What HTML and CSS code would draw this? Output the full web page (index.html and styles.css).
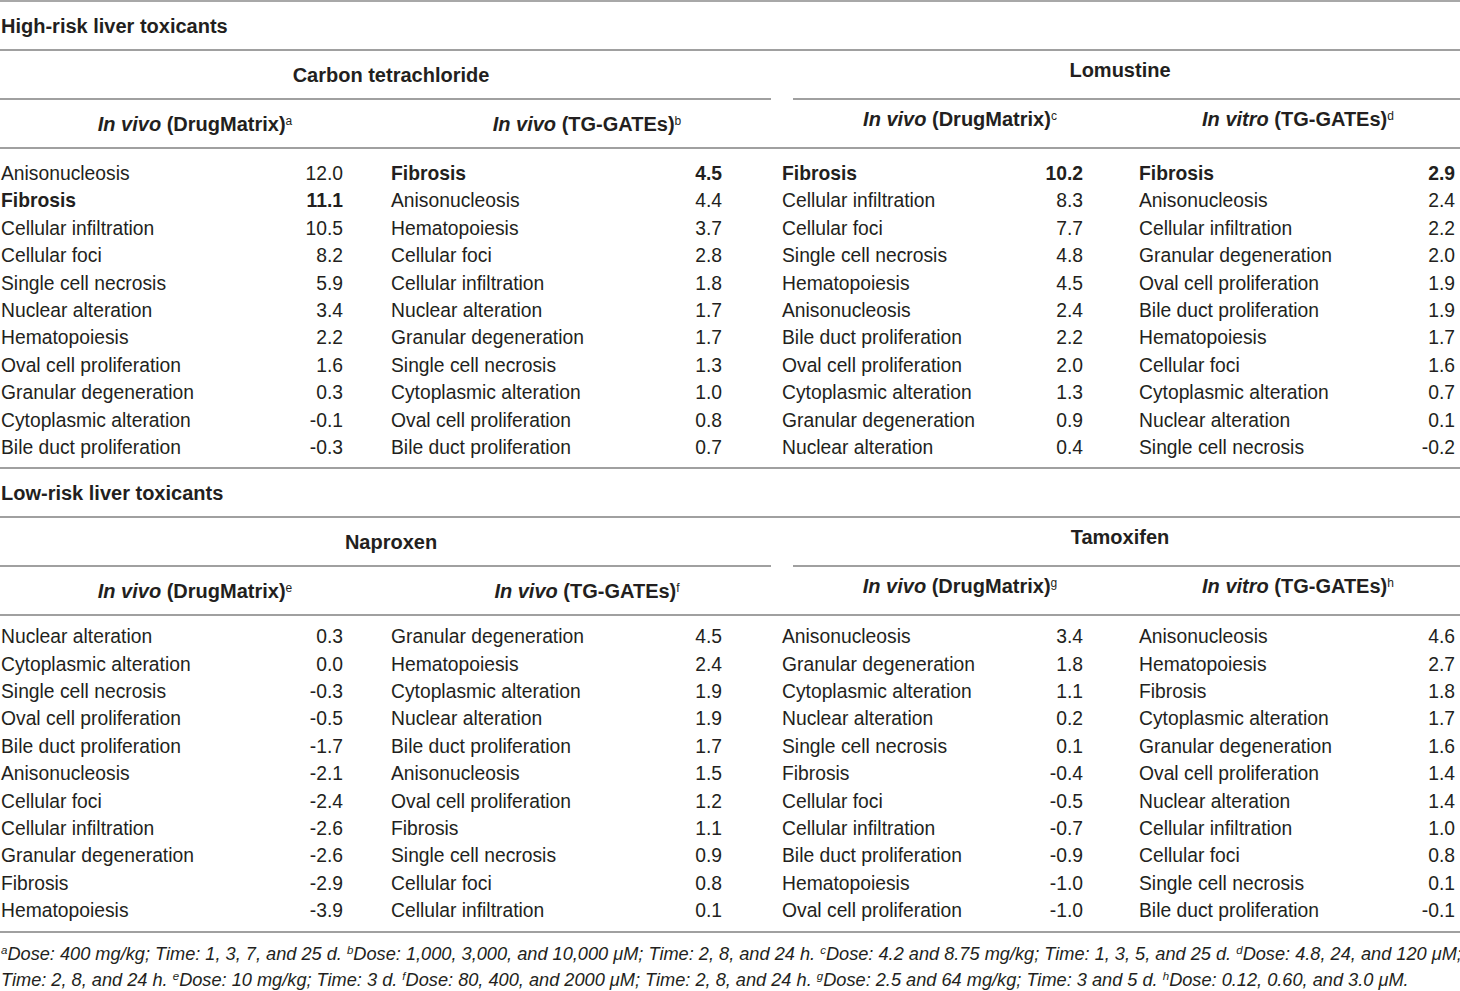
FILE: index.html
```html
<!DOCTYPE html>
<html lang="en">
<head>
<meta charset="utf-8">
<title>Liver toxicants</title>
<link rel="stylesheet" href="styles.css">
</head>
<body>
<div class="table">
  <div class="section-title">High-risk liver toxicants</div>
  <div class="compounds">
    <div class="compound left">Carbon tetrachloride</div>
    <div class="compound right">Lomustine</div>
  </div>
  <div class="subheads">
    <div class="subhead"><i>In vivo</i> (DrugMatrix)<sup>a</sup></div>
    <div class="subhead"><i>In vivo</i> (TG-GATEs)<sup>b</sup></div>
    <div class="subhead right"><i>In vivo</i> (DrugMatrix)<sup>c</sup></div>
    <div class="subhead right"><i>In vitro</i> (TG-GATEs)<sup>d</sup></div>
  </div>
  <div class="data top">
    <div class="cell c1"><span>Anisonucleosis</span><span>12.0</span></div>
    <div class="cell c2 b"><span>Fibrosis</span><span>4.5</span></div>
    <div class="cell c3 b"><span>Fibrosis</span><span>10.2</span></div>
    <div class="cell c4 b"><span>Fibrosis</span><span>2.9</span></div>

    <div class="cell c1 b"><span>Fibrosis</span><span>11.1</span></div>
    <div class="cell c2"><span>Anisonucleosis</span><span>4.4</span></div>
    <div class="cell c3"><span>Cellular infiltration</span><span>8.3</span></div>
    <div class="cell c4"><span>Anisonucleosis</span><span>2.4</span></div>

    <div class="cell c1"><span>Cellular infiltration</span><span>10.5</span></div>
    <div class="cell c2"><span>Hematopoiesis</span><span>3.7</span></div>
    <div class="cell c3"><span>Cellular foci</span><span>7.7</span></div>
    <div class="cell c4"><span>Cellular infiltration</span><span>2.2</span></div>

    <div class="cell c1"><span>Cellular foci</span><span>8.2</span></div>
    <div class="cell c2"><span>Cellular foci</span><span>2.8</span></div>
    <div class="cell c3"><span>Single cell necrosis</span><span>4.8</span></div>
    <div class="cell c4"><span>Granular degeneration</span><span>2.0</span></div>

    <div class="cell c1"><span>Single cell necrosis</span><span>5.9</span></div>
    <div class="cell c2"><span>Cellular infiltration</span><span>1.8</span></div>
    <div class="cell c3"><span>Hematopoiesis</span><span>4.5</span></div>
    <div class="cell c4"><span>Oval cell proliferation</span><span>1.9</span></div>

    <div class="cell c1"><span>Nuclear alteration</span><span>3.4</span></div>
    <div class="cell c2"><span>Nuclear alteration</span><span>1.7</span></div>
    <div class="cell c3"><span>Anisonucleosis</span><span>2.4</span></div>
    <div class="cell c4"><span>Bile duct proliferation</span><span>1.9</span></div>

    <div class="cell c1"><span>Hematopoiesis</span><span>2.2</span></div>
    <div class="cell c2"><span>Granular degeneration</span><span>1.7</span></div>
    <div class="cell c3"><span>Bile duct proliferation</span><span>2.2</span></div>
    <div class="cell c4"><span>Hematopoiesis</span><span>1.7</span></div>

    <div class="cell c1"><span>Oval cell proliferation</span><span>1.6</span></div>
    <div class="cell c2"><span>Single cell necrosis</span><span>1.3</span></div>
    <div class="cell c3"><span>Oval cell proliferation</span><span>2.0</span></div>
    <div class="cell c4"><span>Cellular foci</span><span>1.6</span></div>

    <div class="cell c1"><span>Granular degeneration</span><span>0.3</span></div>
    <div class="cell c2"><span>Cytoplasmic alteration</span><span>1.0</span></div>
    <div class="cell c3"><span>Cytoplasmic alteration</span><span>1.3</span></div>
    <div class="cell c4"><span>Cytoplasmic alteration</span><span>0.7</span></div>

    <div class="cell c1"><span>Cytoplasmic alteration</span><span>-0.1</span></div>
    <div class="cell c2"><span>Oval cell proliferation</span><span>0.8</span></div>
    <div class="cell c3"><span>Granular degeneration</span><span>0.9</span></div>
    <div class="cell c4"><span>Nuclear alteration</span><span>0.1</span></div>

    <div class="cell c1"><span>Bile duct proliferation</span><span>-0.3</span></div>
    <div class="cell c2"><span>Bile duct proliferation</span><span>0.7</span></div>
    <div class="cell c3"><span>Nuclear alteration</span><span>0.4</span></div>
    <div class="cell c4"><span>Single cell necrosis</span><span>-0.2</span></div>
  </div>

  <div class="section-title">Low-risk liver toxicants</div>
  <div class="compounds">
    <div class="compound left">Naproxen</div>
    <div class="compound right">Tamoxifen</div>
  </div>
  <div class="subheads">
    <div class="subhead"><i>In vivo</i> (DrugMatrix)<sup>e</sup></div>
    <div class="subhead"><i>In vivo</i> (TG-GATEs)<sup>f</sup></div>
    <div class="subhead right"><i>In vivo</i> (DrugMatrix)<sup>g</sup></div>
    <div class="subhead right"><i>In vitro</i> (TG-GATEs)<sup>h</sup></div>
  </div>
  <div class="data bottom">
    <div class="cell c1"><span>Nuclear alteration</span><span>0.3</span></div>
    <div class="cell c2"><span>Granular degeneration</span><span>4.5</span></div>
    <div class="cell c3"><span>Anisonucleosis</span><span>3.4</span></div>
    <div class="cell c4"><span>Anisonucleosis</span><span>4.6</span></div>

    <div class="cell c1"><span>Cytoplasmic alteration</span><span>0.0</span></div>
    <div class="cell c2"><span>Hematopoiesis</span><span>2.4</span></div>
    <div class="cell c3"><span>Granular degeneration</span><span>1.8</span></div>
    <div class="cell c4"><span>Hematopoiesis</span><span>2.7</span></div>

    <div class="cell c1"><span>Single cell necrosis</span><span>-0.3</span></div>
    <div class="cell c2"><span>Cytoplasmic alteration</span><span>1.9</span></div>
    <div class="cell c3"><span>Cytoplasmic alteration</span><span>1.1</span></div>
    <div class="cell c4"><span>Fibrosis</span><span>1.8</span></div>

    <div class="cell c1"><span>Oval cell proliferation</span><span>-0.5</span></div>
    <div class="cell c2"><span>Nuclear alteration</span><span>1.9</span></div>
    <div class="cell c3"><span>Nuclear alteration</span><span>0.2</span></div>
    <div class="cell c4"><span>Cytoplasmic alteration</span><span>1.7</span></div>

    <div class="cell c1"><span>Bile duct proliferation</span><span>-1.7</span></div>
    <div class="cell c2"><span>Bile duct proliferation</span><span>1.7</span></div>
    <div class="cell c3"><span>Single cell necrosis</span><span>0.1</span></div>
    <div class="cell c4"><span>Granular degeneration</span><span>1.6</span></div>

    <div class="cell c1"><span>Anisonucleosis</span><span>-2.1</span></div>
    <div class="cell c2"><span>Anisonucleosis</span><span>1.5</span></div>
    <div class="cell c3"><span>Fibrosis</span><span>-0.4</span></div>
    <div class="cell c4"><span>Oval cell proliferation</span><span>1.4</span></div>

    <div class="cell c1"><span>Cellular foci</span><span>-2.4</span></div>
    <div class="cell c2"><span>Oval cell proliferation</span><span>1.2</span></div>
    <div class="cell c3"><span>Cellular foci</span><span>-0.5</span></div>
    <div class="cell c4"><span>Nuclear alteration</span><span>1.4</span></div>

    <div class="cell c1"><span>Cellular infiltration</span><span>-2.6</span></div>
    <div class="cell c2"><span>Fibrosis</span><span>1.1</span></div>
    <div class="cell c3"><span>Cellular infiltration</span><span>-0.7</span></div>
    <div class="cell c4"><span>Cellular infiltration</span><span>1.0</span></div>

    <div class="cell c1"><span>Granular degeneration</span><span>-2.6</span></div>
    <div class="cell c2"><span>Single cell necrosis</span><span>0.9</span></div>
    <div class="cell c3"><span>Bile duct proliferation</span><span>-0.9</span></div>
    <div class="cell c4"><span>Cellular foci</span><span>0.8</span></div>

    <div class="cell c1"><span>Fibrosis</span><span>-2.9</span></div>
    <div class="cell c2"><span>Cellular foci</span><span>0.8</span></div>
    <div class="cell c3"><span>Hematopoiesis</span><span>-1.0</span></div>
    <div class="cell c4"><span>Single cell necrosis</span><span>0.1</span></div>

    <div class="cell c1"><span>Hematopoiesis</span><span>-3.9</span></div>
    <div class="cell c2"><span>Cellular infiltration</span><span>0.1</span></div>
    <div class="cell c3"><span>Oval cell proliferation</span><span>-1.0</span></div>
    <div class="cell c4"><span>Bile duct proliferation</span><span>-0.1</span></div>
  </div>

  <p class="notes"><sup>a</sup>Dose: 400 mg/kg; Time: 1, 3, 7, and 25 d. <sup>b</sup>Dose: 1,000, 3,000, and 10,000 μM; Time: 2, 8, and 24 h. <sup>c</sup>Dose: 4.2 and 8.75 mg/kg; Time: 1, 3, 5, and 25 d. <sup>d</sup>Dose: 4.8, 24, and 120 μM;<br>Time: 2, 8, and 24 h. <sup>e</sup>Dose: 10 mg/kg; Time: 3 d. <sup>f</sup>Dose: 80, 400, and 2000 μM; Time: 2, 8, and 24 h. <sup>g</sup>Dose: 2.5 and 64 mg/kg; Time: 3 and 5 d. <sup>h</sup>Dose: 0.12, 0.60, and 3.0 μM.</p>
</div>
</body>
</html>
```
FILE: styles.css
```css
html, body {
  margin: 0;
  padding: 0;
  background: #ffffff;
}

body {
  font-family: "Liberation Sans", Arial, sans-serif;
  color: #231f20;
  width: 1460px;
}

.table {
  border-top: 2px solid #a8a8a8;
}

.section-title {
  font-weight: bold;
  font-size: 20px;
  box-sizing: border-box;
  height: 49px;
  padding: 2px 0 0 1px;
  line-height: 45px;
  border-bottom: 2px solid #a0a0a0;
}

.compounds {
  display: grid;
  grid-template-columns: 771px 667px;
  column-gap: 22px;
}

.compound {
  font-weight: bold;
  font-size: 20px;
  height: 49px;
  box-sizing: border-box;
  border-bottom: 2px solid #a0a0a0;
  text-align: center;
  line-height: 49px;
}

.compound.left {
  padding-left: 11px;
}

.compound.right {
  padding-right: 13px;
  line-height: 39px;
}

.subheads {
  display: grid;
  grid-template-columns: 390px 394px 352px 324px;
  height: 49px;
  box-sizing: border-box;
  border-bottom: 2px solid #a0a0a0;
}

.subhead {
  font-weight: bold;
  font-size: 20px;
  text-align: center;
  line-height: 49px;
}

.subhead.right {
  line-height: 39px;
}

sup {
  font-size: 12px;
  font-weight: normal;
  line-height: 0;
  vertical-align: 6px;
}

.data {
  display: grid;
  grid-template-columns: 390px 381px 356px 333px;
  grid-auto-rows: 27.4px;
  border-bottom: 2px solid #a0a0a0;
  font-size: 19.3px;
}

.data.top {
  padding-top: 11px;
  padding-bottom: 6px;
}

.data.bottom {
  padding-top: 7px;
  padding-bottom: 6px;
}

.cell {
  display: flex;
  justify-content: space-between;
  align-items: center;
  line-height: 27.4px;
  white-space: nowrap;
}

.cell.b {
  font-weight: bold;
}

.c1 {
  padding-left: 1px;
  padding-right: 47px;
}

.c2 {
  padding-left: 1px;
  padding-right: 49px;
}

.c3 {
  padding-left: 11px;
  padding-right: 44px;
}

.c4 {
  padding-left: 12px;
  padding-right: 5px;
}

.notes {
  margin: 0;
  padding: 8px 0 0 1px;
  font-style: italic;
  font-size: 18.2px;
  line-height: 26px;
  white-space: nowrap;
}

.notes sup {
  font-size: 11.5px;
  font-style: italic;
  vertical-align: 6px;
}
```
